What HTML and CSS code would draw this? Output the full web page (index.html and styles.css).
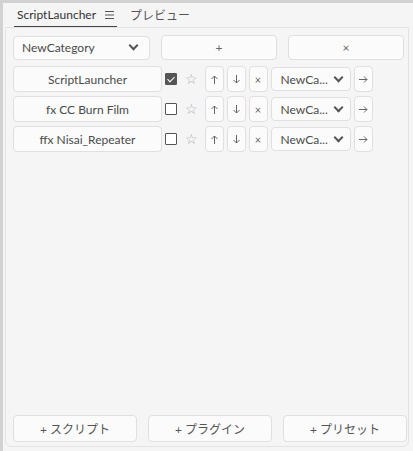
FILE: index.html
```html
<!DOCTYPE html>
<html>
<head>
  <title>ScriptLauncher</title>
  <link rel="stylesheet" href="styles.css">
</head>
<body>
  <div class="frame">
    <div class="tabs">
      <div class="tab active">ScriptLauncher
        <svg class="menu" width="9" height="8" viewBox="0 0 9 8"><path d="M0 0.5H9M0 4H9M0 7.5H9" stroke="#555" stroke-width="1"/></svg>
      </div>
      <div class="tab">プレビュー</div>
    </div>
    <div class="panel">
      <div class="toolbar">
        <div class="select wide">NewCategory <span class="chev"></span></div>
        <button class="button">+</button>
        <button class="button">×</button>
      </div>
      <div class="list">
        <div class="row">
          <button class="button script">ScriptLauncher</button>
          <span class="check on"></span>
          <span class="star">☆</span>
          <button class="button small"><svg width="7" height="9" viewBox="0 0 7 9"><path d="M3.5 9V1M0.5 4L3.5 1L6.5 4" fill="none" stroke="#666" stroke-width="1"/></svg></button>
          <button class="button small"><svg width="7" height="9" viewBox="0 0 7 9"><path d="M3.5 0V8M0.5 5L3.5 8L6.5 5" fill="none" stroke="#666" stroke-width="1"/></svg></button>
          <button class="button small">×</button>
          <div class="select cat">NewCa... <span class="chev"></span></div>
          <button class="button small"><svg width="9" height="7" viewBox="0 0 9 7"><path d="M0 3.5H8M5 0.5L8 3.5L5 6.5" fill="none" stroke="#666" stroke-width="1"/></svg></button>
        </div>
        <div class="row">
          <button class="button script">fx CC Burn Film</button>
          <span class="check"></span>
          <span class="star">☆</span>
          <button class="button small"><svg width="7" height="9" viewBox="0 0 7 9"><path d="M3.5 9V1M0.5 4L3.5 1L6.5 4" fill="none" stroke="#666" stroke-width="1"/></svg></button>
          <button class="button small"><svg width="7" height="9" viewBox="0 0 7 9"><path d="M3.5 0V8M0.5 5L3.5 8L6.5 5" fill="none" stroke="#666" stroke-width="1"/></svg></button>
          <button class="button small">×</button>
          <div class="select cat">NewCa... <span class="chev"></span></div>
          <button class="button small"><svg width="9" height="7" viewBox="0 0 9 7"><path d="M0 3.5H8M5 0.5L8 3.5L5 6.5" fill="none" stroke="#666" stroke-width="1"/></svg></button>
        </div>
        <div class="row">
          <button class="button script">ffx Nisai_Repeater</button>
          <span class="check"></span>
          <span class="star">☆</span>
          <button class="button small"><svg width="7" height="9" viewBox="0 0 7 9"><path d="M3.5 9V1M0.5 4L3.5 1L6.5 4" fill="none" stroke="#666" stroke-width="1"/></svg></button>
          <button class="button small"><svg width="7" height="9" viewBox="0 0 7 9"><path d="M3.5 0V8M0.5 5L3.5 8L6.5 5" fill="none" stroke="#666" stroke-width="1"/></svg></button>
          <button class="button small">×</button>
          <div class="select cat">NewCa... <span class="chev"></span></div>
          <button class="button small"><svg width="9" height="7" viewBox="0 0 9 7"><path d="M0 3.5H8M5 0.5L8 3.5L5 6.5" fill="none" stroke="#666" stroke-width="1"/></svg></button>
        </div>
      </div>
      <div class="footer">
        <button class="button">+ スクリプト</button>
        <button class="button">+ プラグイン</button>
        <button class="button">+ プリセット</button>
      </div>
    </div>
  </div>
</body>
</html>
```

FILE: styles.css
```css
html, body {
  margin: 0;
  height: 100%;
}
body {
  font-family: Lato, "Noto Sans CJK JP", sans-serif;
  font-size: 12px;
  color: #4a4a4a;
  background: #d2d2d2;
}
.frame {
  margin: 3px 0 0 3px;
  height: 448px;
  background: #f5f5f5;
  display: flex;
  flex-direction: column;
}
.tabs {
  display: flex;
  height: 24px;
  padding-left: 11px;
  gap: 10px;
  align-items: flex-end;
}
.tab {
  padding: 0 3px 4px;
  color: #555;
  display: flex;
  align-items: center;
}
.tab.active {
  color: #333;
  border-bottom: 1px solid #444;
}
.menu {
  margin-left: 9px;
}
.panel {
  flex: 1;
  margin: 0 4px 4px 2px;
  border: 1px solid #e4e4e4;
  border-radius: 0 0 6px 6px;
  display: flex;
  flex-direction: column;
  padding: 7px 4px 4px 7px;
}
.button {
  font-family: inherit;
  font-size: 12px;
  color: #4a4a4a;
  background: #fbfbfb;
  border: 1px solid #e0e0e0;
  border-radius: 4px;
  height: 26px;
  padding: 0;
  display: flex;
  align-items: center;
  justify-content: center;
}
.select {
  background: #fbfbfb;
  border: 1px solid #e0e0e0;
  border-radius: 4px;
  height: 24px;
  display: flex;
  align-items: center;
  justify-content: space-between;
  padding: 0 12px 0 8px;
  box-sizing: border-box;
}
.chev {
  width: 5px;
  height: 5px;
  border-right: 2px solid #555;
  border-bottom: 2px solid #555;
  transform: translateY(-2px) rotate(45deg);
}
.toolbar {
  display: grid;
  grid-template-columns: 137px 116px 116px;
  column-gap: 11px;
  align-items: center;
}
.toolbar .button {
  height: 25px;
  color: #666;
}
.list {
  flex: 1;
  margin-top: 6px;
  display: flex;
  flex-direction: column;
  gap: 4px;
}
.row {
  display: flex;
  align-items: center;
}
.script {
  width: 149px;
  height: 26px;
}
.check {
  width: 10px;
  height: 10px;
  border: 1.5px solid #555;
  border-radius: 1px;
  margin-left: 3px;
  background: #fff;
}
.check.on {
  background: #555;
  position: relative;
}
.check.on::after {
  content: "";
  position: absolute;
  left: 3px;
  top: 0.5px;
  width: 3px;
  height: 6px;
  border-right: 1.5px solid #fff;
  border-bottom: 1.5px solid #fff;
  transform: rotate(45deg);
}
.star {
  color: #aaa;
  font-size: 14px;
  margin: 0 7px 0 8px;
  font-family: "DejaVu Sans", sans-serif;
}
.small {
  width: 19px;
  height: 26px;
  margin-right: 3px;
  font-size: 11px;
  color: #666;
}
.cat {
  width: 80px;
  height: 24px;
  margin-right: 3px;
  padding: 0 8px 0 9px;
}
.footer {
  display: grid;
  grid-template-columns: 124px 124px 124px;
  column-gap: 11px;
}
.footer .button {
  height: 27px;
  color: #555;
}
```
